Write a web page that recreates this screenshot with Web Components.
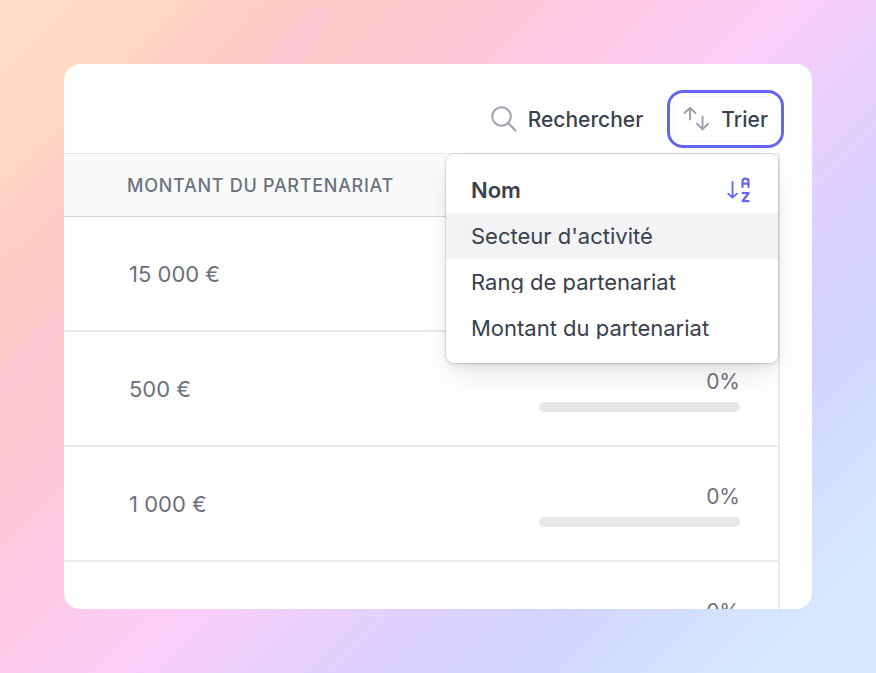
<!DOCTYPE html>
<html lang="fr">
<head>
<meta charset="utf-8">
<title>Partenariats</title>
<style>
  html, body { margin: 0; height: 100%; }
  body { font-family: Inter, "Liberation Sans", sans-serif; }
</style>
</head>
<body>
<app-stage>
  <data-panel>
    <tool-button slot="tools" icon="search">Rechercher</tool-button>
    <sort-menu slot="tools" label="Trier">
      <sort-option selected>Nom</sort-option>
      <sort-option active>Secteur d'activité</sort-option>
      <sort-option>Rang de partenariat</sort-option>
      <sort-option>Montant du partenariat</sort-option>
    </sort-menu>
    <partner-table></partner-table>
  </data-panel>
</app-stage>

<script>
class BaseElement extends HTMLElement {
  render(html) {
    if (!this.shadowRoot) this.attachShadow({ mode: 'open' });
    this.shadowRoot.innerHTML = html;
  }
}

const icons = {
  search: `<svg width="28" height="28" viewBox="0 1 28 28" fill="none" stroke="#9ca3af" stroke-width="2" stroke-linecap="round" aria-hidden="true">
    <circle cx="11.5" cy="11.5" r="9.3"/><path d="M18.3 18.3 25.5 25.5"/></svg>`,
  sort: `<svg width="28" height="28" viewBox="0 1 28 28" fill="none" stroke="#9ca3af" stroke-width="2" stroke-linecap="round" stroke-linejoin="round" aria-hidden="true">
    <path d="M8 14.5V3M2.5 8 8 2.7 13.5 8M20.5 11.5V24M15 18.7 20.5 24.3 26 18.7"/></svg>`,
  az: `<svg width="24" height="28" viewBox="0 0 24 28" fill="none" stroke="#6366f1" stroke-width="2.2" stroke-linecap="round" stroke-linejoin="round" aria-hidden="true">
    <path stroke-width="1.8" d="M5.5 6V21.5M1.2 17.6 5.5 21.7 9.8 17.6"/>
    <path d="M15.5 11V5.5C15.5 3.6 16.6 2.6 18.5 2.6S21.5 3.6 21.5 5.5V11M15.5 7.7H21.5"/>
    <path d="M15.6 17H21.6L15.6 25.2H21.6"/></svg>`
};

customElements.define('app-stage', class extends BaseElement {
  connectedCallback() {
    this.render(`<style>
      :host { display: grid; box-sizing: border-box; min-height: 100vh; padding: 64px; position: relative; overflow: hidden;
        background: linear-gradient(135deg, #ffdac5 0%, #ffd9c4 9%, #ffc9c6 20%, #ffc9d3 29%, #ffcae6 41%, #fbcdfa 52%, #ecd0fd 59%, #dcd1ff 68%, #d3d5ff 77%, #d4e0ff 85%, #d7e7ff 92%); }
      .glow { position: absolute; inset: 0; width: 100%; height: 100%; }
      ::slotted(*) { position: relative; }
    </style>
    <svg class="glow" viewBox="0 0 876 673" preserveAspectRatio="none" aria-hidden="true">
      <path fill="#ffc6d6" fill-opacity=".75" d="M316 7C296 18 276 46 258 70L292 70C312 52 328 26 329 12Q329 6 316 7Z"/>
      <path fill="#ffc6d6" fill-opacity=".75" d="M57 311C38 328 12 352 3 371C1 384 1 396 5 400C22 390 42 360 52 348C60 336 62 326 61 314Q60 309 57 311Z"/>
    </svg><slot></slot>`);
  }
});

customElements.define('data-panel', class extends BaseElement {
  connectedCallback() {
    this.render(`<style>
      :host { display: grid; grid-template-rows: 89px 1fr; background: #fff; border-radius: 16px; height: calc(100vh - 128px); }
      .bar { display: flex; align-items: center; justify-content: flex-end; gap: 24px; padding: 20px 28px 0 0; position: relative; z-index: 1; }
      .body { overflow: hidden; min-height: 0; border-radius: 0 0 16px 16px; padding-right: 32px; }
    </style>
    <div class="bar"><slot name="tools"></slot></div>
    <div class="body"><slot></slot></div>`);
  }
});

customElements.define('tool-button', class extends BaseElement {
  connectedCallback() {
    this.render(`<style>
      :host { display: block; }
      button { display: flex; align-items: center; gap: 10px; padding: 2px 0 0; margin: 0; border: 0; background: none; color: #374151; font: 500 21px/28px Inter, "Liberation Sans", sans-serif; }
      svg { display: block; }
    </style>
    <button type="button">${icons[this.getAttribute('icon')]}<slot></slot></button>`);
  }
});

customElements.define('sort-menu', class extends BaseElement {
  connectedCallback() {
    this.render(`<style>
      :host { display: block; position: relative; }
      button { display: flex; align-items: center; gap: 11px; margin: 0; padding: 13px 13px 11px 12px; border: 3px solid #6366f1; border-radius: 16px; background: #fff;
        box-shadow: inset 0 0 0 3px #fff, inset 0 0 1px 4px #f6f7f9; color: #374151; font: 500 21px/28px Inter, "Liberation Sans", sans-serif; }
      svg { display: block; }
      .menu { position: absolute; top: calc(100% + 6px); right: 6px; width: 332px; box-sizing: border-box; padding: 13px 0 12px; background: #fff; border-radius: 8px;
        box-shadow: 0 0 0 1px rgba(0,0,0,.07), 0 1px 3px rgba(0,0,0,.1), 0 14px 30px -4px rgba(0,0,0,.1), 0 6px 12px -4px rgba(0,0,0,.08); }
    </style>
    <button type="button" aria-haspopup="listbox" aria-expanded="true">${icons.sort}${this.getAttribute('label')}</button>
    <div class="menu" role="listbox" aria-label="${this.getAttribute('label')}"><slot></slot></div>`);
  }
});

customElements.define('sort-option', class extends BaseElement {
  connectedCallback() {
    const on = this.hasAttribute('selected');
    this.setAttribute('role', 'option');
    this.setAttribute('aria-selected', on);
    this.render(`<style>
      :host { display: block; }
      button { display: flex; align-items: center; justify-content: space-between; width: 100%; height: 46px; margin: 0; padding: 0 27px 0 25px; border: 0; background: none; color: #374151; text-align: left; font: 400 22px/22px Inter, "Liberation Sans", sans-serif; }
      :host([active]) button { background: #f3f3f6; }
      :host([selected]) button { font-weight: 600; }
      span { overflow: hidden; white-space: nowrap; }
      svg { display: block; }
    </style>
    <button type="button"><span><slot></slot></span>${on ? icons.az : ''}</button>`);
  }
});

customElements.define('partner-table', class extends BaseElement {
  connectedCallback() {
    const rows = ['15 000 €', '500 €', '1 000 €', ''];
    this.render(`<style>
      :host { display: block; border-right: 2px solid #e9eaec; }
      table { width: 100%; border-collapse: separate; border-spacing: 0; color: #6b7280; }
      th { box-sizing: border-box; height: 64px; padding: 2px 0 0 63px; text-align: left; background: #f9fbfb; border-top: 1px solid #e5e7eb; border-bottom: 1px solid #d1d5db; font: 500 18px/24px Inter, "Liberation Sans", sans-serif; letter-spacing: .04em; text-transform: uppercase; }
      td { box-sizing: border-box; height: 115px; padding: 0 0 0 65px; border-bottom: 2px solid #e9eaec; font-size: 22px; line-height: 28px; }
      td + td { width: 300px; padding: 2px 38px 0 0; text-align: right; font-size: 21px; }
      progress { display: block; appearance: none; width: 201px; height: 10px; margin: 6px 0 0 auto; border: 0; border-radius: 5px; overflow: hidden; background: #e5e7e9; }
      progress::-webkit-progress-bar { background: #e5e7e9; }
    </style>
    <table>
      <thead><tr><th scope="col">Montant du partenariat</th><th aria-label="Progression"></th></tr></thead>
      <tbody>${rows.map((v, i) => `<tr><td>${v}</td><td>0%<progress value="0" max="100" aria-label="Progression, ligne ${i + 1}"></progress></td></tr>`).join('')}</tbody>
    </table>`);
  }
});
</script>
</body>
</html>
